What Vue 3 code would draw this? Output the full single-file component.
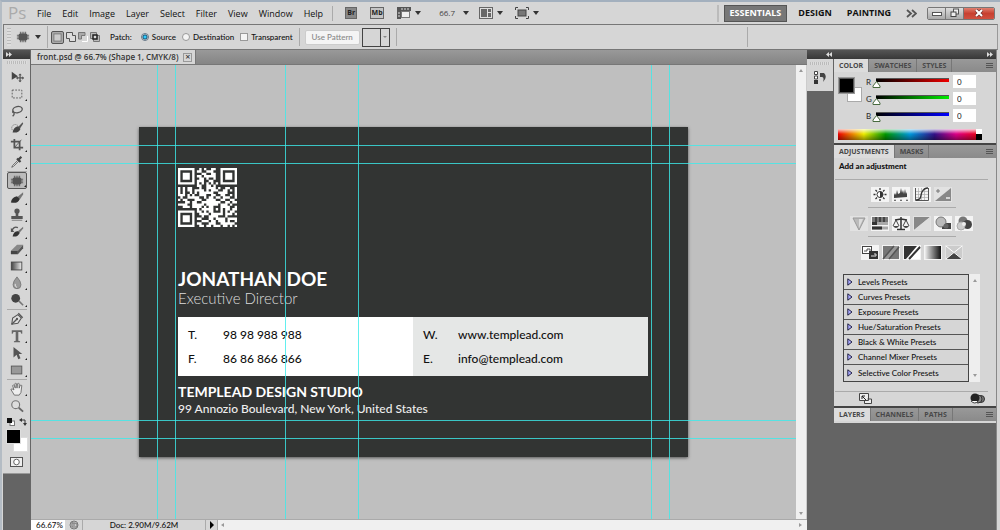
<script setup>
import { ref } from 'vue'

const menus = ['File', 'Edit', 'Image', 'Layer', 'Select', 'Filter', 'View', 'Window', 'Help']
const patch = ref('source')
const transparent = ref(false)

const chip = '<path d="M5 2v12M7 2v12M9 2v12M11 2v12M1 6h14M1 8h14M1 10h14" stroke="#555" fill="none"/><rect x="3" y="4" width="10" height="8" rx="2" fill="#555"/>'

const toolGroups = [
  [
    { name: 'Move', art: '<path d="M2 2v9l7-4z" fill="#444"/><path d="M11.500 5v8M7.500 9h8" stroke="#555" stroke-width="1.400"/><path d="M11.500 4l2 2h-4zM11.500 14l2-2h-4zM7 9l2-2v4zM16 9l-2-2v4z" fill="#555"/>', plain: true },
    { name: 'Marquee', art: '<rect x="2.500" y="3.500" width="11" height="9" fill="none" stroke="#555" stroke-dasharray="2 1.500"/>' },
    { name: 'Lasso', art: '<ellipse cx="8.500" cy="6.500" rx="5.500" ry="3.500" transform="rotate(-12 8 6)" fill="none" stroke="#555" stroke-width="1.500"/><path d="M4 8q-2 1 0 2t-1 4" fill="none" stroke="#555" stroke-width="1.500"/>' },
    { name: 'Quick selection', art: '<circle cx="6" cy="8" r="4" fill="none" stroke="#777" stroke-dasharray="1.500 1"/><path d="M14.500 1.500L9 7l2 2 4-6z" fill="#555"/><path d="M9 6q-5 1-6 7 7 1 9-4z" fill="#444"/>' },
    { name: 'Crop', art: '<path d="M5 1v10h10M1 4h10v10" fill="none" stroke="#555" stroke-width="2"/><path d="M5 11l8-9" stroke="#555"/>' },
    { name: 'Eyedropper', art: '<path d="M9 6l-6 6-1 2 2-1 6-6" fill="#eee" stroke="#555"/><path d="M8 4l4 4M10 5l3-3" stroke="#444" stroke-width="2.500"/>' }
  ],
  [
    { name: 'Patch', art: chip, active: true },
    { name: 'Brush', art: '<path d="M15 1.500L8 7l3 3 4-6z" fill="#777"/><path d="M8 6q-6 1-7 7 8 2 10-4z" fill="#333"/>' },
    { name: 'Clone stamp', art: '<circle cx="8" cy="3.500" r="3" fill="#555"/><path d="M6.500 5h3v4h5v3.500h-13V9h5z" fill="#555"/><path d="M2 14h12" stroke="#777"/>' },
    { name: 'History brush', art: '<path d="M15 2L8 8l2 2 5-6z" fill="#777"/><path d="M9 7q-5 0-6 6 6 1 8-4z" fill="#333"/><path d="M9 3q-5-2-7 4" fill="none" stroke="#555" stroke-width="1.500"/><path d="M1 3v5h4z" fill="#555"/>' },
    { name: 'Eraser', art: '<path d="M1 10l7-7h7l-6 7z" fill="#888"/><path d="M1 10h8v4H1z" fill="#444"/><path d="M9 10l6-7v4l-6 7z" fill="#555"/>' },
    { name: 'Gradient', art: '<defs><linearGradient id="toolgrad"><stop stop-color="#444"/><stop offset="1" stop-color="#eee"/></linearGradient></defs><rect x="1.500" y="3.500" width="12" height="9" fill="url(#toolgrad)" stroke="#444"/>' },
    { name: 'Blur', art: '<path d="M8 1q-4.500 5-4.500 9a4.500 4.500 0 0 0 9 0q0-4-4.500-9z" fill="#999" stroke="#777"/><path d="M6 9q-1 3 2 4" stroke="#eee" fill="none"/>' },
    { name: 'Dodge', art: '<circle cx="6.500" cy="6" r="5" fill="#444"/><path d="M10 9l5 5" stroke="#777" stroke-width="1.800"/>' }
  ],
  [
    { name: 'Pen', art: '<path d="M2 14l1-7 6-4 4 4-4 6z" fill="#ddd" stroke="#555" stroke-width="1.200"/><path d="M2 14l6-6M9.500 1.500l5 5" stroke="#555" stroke-width="1.600"/><circle cx="8" cy="8" r="1.300" fill="#555"/>' },
    { name: 'Type', art: '<path d="M2 1.500h12v4h-1l-1-2H9.500v10l2 .5v1h-7v-1l2-.5v-10H4l-1 2H2z" fill="#666"/>' },
    { name: 'Path selection', art: '<path d="M4 1v12l3.500-3 2 5 2.500-1-2-5h4z" fill="#555"/>' },
    { name: 'Rectangle', art: '<rect x="1.500" y="3.500" width="12" height="9" fill="#999" stroke="#555"/>' }
  ],
  [
    { name: 'Hand', art: '<path d="M5 15L1 8.500q1-1.500 3.500.5L3 4q1-1 2 0l1 3-.5-5q1-1 2 0l.5 5 .5-5q1-1 2 0v5l1-3q1-1 2 0l-1 8-2 3z" fill="#eee" stroke="#666"/>' },
    { name: 'Zoom', art: '<circle cx="6.500" cy="6.500" r="4.500" fill="#ddd" stroke="#777" stroke-width="1.300"/><path d="M10 10l5 4.500" stroke="#666" stroke-width="2"/>', plain: true }
  ]
]

const adjustmentRows = [
  [
    { name: 'Brightness', art: '<circle cx="9" cy="7.500" r="3" fill="#fff" stroke="#333"/><path d="M9 4.500a3 3 0 0 1 0 6z" fill="#333"/><path d="M9 1v2M9 12v2M2.500 7.500h2M13.500 7.500h2M4.500 3l1.500 1.500M12 10.500l1.500 1.500M13.500 3L12 4.500M6 10.500L4.500 12" stroke="#333" stroke-width="1.300"/>' },
    { name: 'Levels', art: '<path d="M2 11V8l1-2 1 2 1-5 1 4 2-1 1-5 1 5 1-3 1 4 1-5 1 5 1-2v5z" fill="#444"/><path d="M2 14l1-2 1 2zM8 14l1-2 1 2zM14 14l1-2 1 2z" fill="#444"/>' },
    { name: 'Curves', art: '<path d="M5.500 1v12M8.500 1v12M11.500 1v12M3 4.500h12M3 7.500h12M3 10.500h12" stroke="#aaa" stroke-width=".7"/><path d="M2.500 1v12.500h13V1" stroke="#555" fill="none"/><path d="M3 13c6 0 4-4 6-8 1-2 3-4 6-4" fill="none" stroke="#333" stroke-width="1.300"/>' },
    { name: 'Exposure', soft: true, art: '<path d="M1 14L17 1v13z" fill="#888"/><path d="M2 4h4M4 2v4" stroke="#777"/><path d="M12 11h4" stroke="#eee" stroke-width="1.500"/>' }
  ],
  [
    { name: 'Vibrance', soft: true, art: '<path d="M3 2h12L9 14z" fill="#bbb" stroke="#999"/><path d="M9 3h4L9 12z" fill="#ddd"/>' },
    { name: 'Hue and saturation', art: '<path d="M1 1h16v5H1z" fill="#777"/><path d="M5 1v5M9 1v5M13 1v5" stroke="#333" stroke-width="1.500"/><path d="M1 7.500h16M1 12h16" stroke="#aaa" stroke-width="3"/><path d="M1 12h10M1 7.500h5" stroke="#333" stroke-width="3"/>' },
    { name: 'Color balance', art: '<path d="M9 1v12M3 4l6-1 6 1M5 13.500h8" fill="none" stroke="#333" stroke-width="1.500"/><path d="M1 10l3-6 3 6M11 10l3-6 3 6" fill="none" stroke="#444"/><path d="M1 10h6q-3 4-6 0zM11 10h6q-3 4-6 0z" fill="#444"/>' },
    { name: 'Black and white', soft: true, art: '<path d="M1 1h16L1 14z" fill="#888"/><path d="M17 1v13H1z" fill="#ddd"/>' },
    { name: 'Photo filter', art: '<path d="M8 7h9v6H8z" fill="#444"/><circle cx="7" cy="6" r="5" fill="#bbb" stroke="#777"/><circle cx="12" cy="10" r="2.500" fill="#666"/>' },
    { name: 'Channel mixer', art: '<circle cx="8" cy="5" r="4.500" fill="#777"/><circle cx="12.500" cy="8.500" r="4.500" fill="#444"/><circle cx="6" cy="10" r="4" fill="#ccc" stroke="#aaa"/><circle cx="9" cy="8" r="2" fill="#eee"/>' }
  ],
  [
    { name: 'Invert', art: '<rect x="1.500" y="1.500" width="9" height="7" fill="#fff" stroke="#444"/><path d="M3 6h3V4h3v2" stroke="#555" fill="none"/><rect x="8" y="6" width="9" height="8" fill="#333"/><path d="M10 11h5V9h-2" stroke="#ddd" fill="none"/>' },
    { name: 'Posterize', art: '<path d="M1 1h16v13H1z" fill="#777"/><path d="M1 14L12 1h5L7 14z" fill="#999"/><path d="M1 14L12 1M7 14L17 2" stroke="#555" stroke-width="1.500"/>' },
    { name: 'Threshold', art: '<path d="M1 1h16v13H1z" fill="#333"/><path d="M3 14L14 1h3L7 14z" fill="#fff"/><path d="M7 14L17 3v11z" fill="#fff"/><path d="M6 14L17 2" stroke="#333" stroke-width="2"/>' },
    { name: 'Gradient map', art: '<defs><linearGradient id="mapgrad"><stop stop-color="#eee"/><stop offset="1" stop-color="#111"/></linearGradient></defs><path d="M1 1h16v13H1z" fill="url(#mapgrad)"/>' },
    { name: 'Selective color', soft: true, art: '<path d="M1 1h16v13H1z" fill="#ccc"/><path d="M1 14l8-7 8 7z" fill="#444"/><path d="M1 1l16 13M17 1L1 14" stroke="#fff"/>' }
  ]
]

const presets = ['Levels', 'Curves', 'Exposure', 'Hue/Saturation', 'Black & White', 'Channel Mixer', 'Selective Color']
const channels = ref([
  { name: 'R', value: '0', tone: 'red' },
  { name: 'G', value: '0', tone: 'green' },
  { name: 'B', value: '0', tone: 'blue' }
])

const qr = [
  '1111111001010011001111111',
  '1000001011001110001000001',
  '1011101000110011001011101',
  '1011101011011111001011101',
  '1011101001101001001011101',
  '1000001011100110001000001',
  '1111111010101010101111111',
  '0000000011001101000000000',
  '1010110001001111010011001',
  '1010110111101011100110101',
  '1010010101111110011110001',
  '1110101001110011001100101',
  '0100111110010110110111001',
  '1011000111001111001100110',
  '0001101100111111110011011',
  '1111001111101111101110100',
  '0011101111010110001111001',
  '0000000010111110101011011',
  '1111111011010110001010110',
  '1000001001111011111011101',
  '1011101000100111100010000',
  '1011101011000110111101111',
  '1011101000111011011101001',
  '1000001011000111001111110',
  '1111111001101101110110101'
]
const qrPath = qr.map((row, y) => [...row].map((c, x) => (c === '1' ? `M${x} ${y}h1v1h-1z` : '')).join('')).join('')

const verticalGuides = [126, 144, 254, 327, 620, 638]
const horizontalGuides = [80, 98, 355, 373]
</script>

<template>
  <div class="app">
    <header class="menubar">
      <span class="logo">Ps</span>
      <nav class="menus">
        <button v-for="m in menus" :key="m">{{ m }}</button>
      </nav>
      <div class="launch">
        <button class="square" aria-label="Bridge"><b>Br</b></button>
        <button class="square folder" aria-label="Mini Bridge"><b>Mb</b></button>
        <button class="drop" aria-label="View extras">
          <svg width="14" height="12" viewBox="0 0 14 12"><path d="M0 0h14v4H4v8H0z" fill="#555" /><path d="M5 1v2M8 1v2M11 1v2M1 6h2M1 9h2" stroke="#ddd" /><rect x="4.500" y="4.500" width="8" height="6" fill="#eee" stroke="#777" /></svg>
          <i class="caret"></i>
        </button>
        <button class="drop level">66.7<i class="caret"></i></button>
        <button class="drop" aria-label="Arrange documents">
          <svg width="14" height="12" viewBox="0 0 14 12"><rect x=".5" y=".5" width="13" height="11" fill="#ddd" stroke="#666" /><path d="M2 2h6v8H2zM9 2h3v3H9zM9 6h3v4H9z" fill="#666" /></svg>
          <i class="caret"></i>
        </button>
        <button class="drop" aria-label="Screen mode">
          <svg width="14" height="12" viewBox="0 0 14 12"><rect x="3" y="3" width="8" height="6" fill="#777" stroke="#444" /><path d="M.5 3V.5H3M11 .5h2.500V3M13.500 9v2.500H11M3 11.500H.5V9" fill="none" stroke="#444" /></svg>
          <i class="caret"></i>
        </button>
      </div>
      <div class="workspaces">
        <button class="chosen">ESSENTIALS</button>
        <button>DESIGN</button>
        <button>PAINTING</button>
        <button class="more" aria-label="More workspaces">
          <svg width="11" height="9" viewBox="0 0 11 9"><path d="M1 1l4 3.500L1 8M6 1l4 3.500L6 8" fill="none" stroke="#555" stroke-width="1.800" /></svg>
        </button>
      </div>
      <div class="window">
        <button aria-label="Minimize"><svg width="10" height="8" viewBox="0 0 10 8"><rect x=".5" y="3.500" width="9" height="3" fill="#fff" stroke="#555" /></svg></button>
        <button aria-label="Restore"><svg width="10" height="10" viewBox="0 0 10 10"><rect x="3.500" y="1" width="5" height="5" fill="#eee" stroke="#555" /><rect x="1" y="4" width="5" height="4.500" fill="#eee" stroke="#444" /></svg></button>
        <button class="close" aria-label="Close"><svg width="10" height="8" viewBox="0 0 10 8"><path d="M2 1l6 6M8 1L2 7" stroke="#733" stroke-width="3.500" /><path d="M2 1l6 6M8 1L2 7" stroke="#fff" stroke-width="2" /></svg></button>
      </div>
    </header>

    <section class="options">
      <i class="grip-v"></i>
      <button class="toolpick" aria-label="Patch tool presets"><svg width="14" height="14" viewBox="0 0 16 16" v-html="chip"></svg><i class="caret"></i></button>
      <div class="modes">
        <button class="on" aria-label="New selection"><svg width="9" height="9" viewBox="0 0 10 10"><rect x="1" y="1" width="8" height="8" fill="#ccc" stroke="#777" /></svg></button>
        <button aria-label="Add to selection"><svg width="10" height="10" viewBox="0 0 10 10"><path d="M.5.5h6v3h3v6h-6v-3h-3z" fill="#ddd" stroke="#555" /></svg></button>
        <button aria-label="Subtract from selection"><svg width="10" height="10" viewBox="0 0 10 10"><path d="M.5 7V.5H7v3H3.500V7z" fill="#aaa" stroke="#777" /><path d="M4 9.500h5.500V4" fill="none" stroke="#fff" /></svg></button>
        <button aria-label="Intersect with selection"><svg width="10" height="10" viewBox="0 0 10 10"><path d="M.5.5h6v3h3v6h-6v-3h-3z" fill="#bbb" stroke="#777" /><rect x="3" y="3" width="4" height="4" fill="#ddd" stroke="#222" stroke-width="1.500" /></svg></button>
      </div>
      <span class="caption">Patch:</span>
      <label><input v-model="patch" type="radio" name="patch" value="source">Source</label>
      <label><input v-model="patch" type="radio" name="patch" value="destination">Destination</label>
      <label><input v-model="transparent" type="checkbox">Transparent</label>
      <div class="pattern">
        <button class="use" disabled>Use Pattern</button>
        <button class="swatch" aria-label="Pattern picker"><span></span><i class="caret"></i></button>
      </div>
      <i class="options-end"></i>
    </section>

    <main>
      <aside class="toolbox">
        <div class="strip"><svg width="6" height="5" viewBox="0 0 6 5"><path d="M0 0l3 2.500L0 5zM3 0l3 2.500L3 5z" fill="#ddd" /></svg></div>
        <div class="tools">
          <i class="grip-h"></i>
          <div v-for="(group, g) in toolGroups" :key="g" class="group">
            <button v-for="t in group" :key="t.name" :aria-label="t.name" :class="{ active: t.active, flyout: !t.plain }">
              <svg width="14" height="14" viewBox="0 0 16 16" v-html="t.art"></svg>
            </button>
          </div>
          <div class="mini">
            <svg width="8" height="8" viewBox="0 0 8 8"><rect x="3" y="3" width="4.500" height="4.500" fill="#fff" stroke="#777" /><path d="M0 0h5v5H0z" fill="#111" /></svg>
            <svg width="8" height="8" viewBox="0 0 8 8"><path d="M2 2h4v4" fill="none" stroke="#333" /><path d="M0 2l3-2v4zM6 8L4 5h4z" fill="#333" /></svg>
          </div>
          <div class="inks"><i class="back"></i><i class="front"></i></div>
          <button class="mask" aria-label="Quick mask"><svg width="13" height="10" viewBox="0 0 13 10"><rect x=".5" y=".5" width="12" height="9" fill="#eee" stroke="#555" /><circle cx="6.500" cy="5" r="2.800" fill="#fff" stroke="#666" /></svg></button>
        </div>
      </aside>

      <section class="document">
        <div class="tabs">
          <div class="tab">front.psd @ 66.7% (Shape 1, CMYK/8)<button aria-label="Close document">×</button></div>
        </div>
        <div class="view">
          <div class="canvas">
            <article class="card">
              <svg class="qr" viewBox="0 0 25 25" role="img" aria-label="QR code"><path :d="qrPath" fill="#fff" /></svg>
              <h1>JONATHAN DOE</h1>
              <p class="role">Executive Director</p>
              <div class="contacts">
                <dl>
                  <dt>T.</dt><dd>98 98 988 988</dd>
                  <dt>F.</dt><dd>86 86 866 866</dd>
                </dl>
                <dl>
                  <dt>W.</dt><dd>www.templead.com</dd>
                  <dt>E.</dt><dd>info@templead.com</dd>
                </dl>
              </div>
              <h2>TEMPLEAD DESIGN STUDIO</h2>
              <p class="address">99 Annozio Boulevard, New York, United States</p>
            </article>
            <i v-for="x in verticalGuides" :key="'v' + x" class="guide-v" :style="{ left: x + 'px' }"></i>
            <i v-for="y in horizontalGuides" :key="'h' + y" class="guide-h" :style="{ top: y + 'px' }"></i>
          </div>
          <div class="scroll-v"><i class="up"></i><i class="down"></i></div>
        </div>
        <footer>
          <input value="66.67%" aria-label="Zoom level">
          <button class="info" aria-label="Document information"><svg width="10" height="10" viewBox="0 0 10 10"><circle cx="5" cy="5" r="4" fill="#ccc" stroke="#777" /><path d="M3 2v5h5V4L6 3H3M5 3v3" fill="none" stroke="#777" /></svg></button>
          <span class="size">Doc: 2.90M/9.62M</span>
          <button class="next" aria-label="Status options"><i></i></button>
          <div class="scroll-h"><i class="left"></i><i class="right"></i></div>
        </footer>
      </section>

      <aside class="dock">
        <div class="strip">
          <svg width="6" height="5" viewBox="0 0 6 5"><path d="M3 0L0 2.500 3 5zM6 0L3 2.500 6 5z" fill="#ddd" /></svg>
          <svg width="6" height="5" viewBox="0 0 6 5"><path d="M0 0l3 2.500L0 5zM3 0l3 2.500L3 5z" fill="#ddd" /></svg>
        </div>
        <div class="columns">
          <div class="rail">
            <div class="history">
              <i class="grip-h"></i>
              <button aria-label="History"><svg width="12" height="14" viewBox="0 0 12 14"><path d="M.5.5h3v3h-3zM.5 5h3v3h-3z" fill="#fff" stroke="#444" /><path d="M0 9h4v4H0z" fill="#333" /><path d="M6 2h4q4 4-1 9 1.500-5-1-5H6z" fill="#444" /></svg></button>
            </div>
          </div>
          <div class="panels">
            <section class="panel">
              <div class="panel-tabs"><button class="current">COLOR</button><button>SWATCHES</button><button>STYLES</button><i class="panel-menu"></i></div>
              <div class="color-body">
                <div class="mixer">
                  <div class="pair"><i class="back"></i><i class="front"></i></div>
                  <div class="sliders">
                    <div v-for="c in channels" :key="c.name" class="channel">
                      <label :for="'ch' + c.name">{{ c.name }}</label>
                      <div class="track" :class="c.tone">
                        <svg width="9" height="7" viewBox="0 0 9 7"><path d="M4.500 .5L8 5v1.500H1V5z" fill="#fff" stroke="#486b40" /></svg>
                      </div>
                      <input :id="'ch' + c.name" v-model="c.value">
                    </div>
                  </div>
                </div>
                <div class="spectrum"><i></i></div>
              </div>
            </section>

            <section class="panel">
              <div class="panel-tabs"><button class="current">ADJUSTMENTS</button><button>MASKS</button><i class="panel-menu"></i></div>
              <div class="adjust-body">
                <h3>Add an adjustment</h3>
                <div class="icon-rows">
                  <div v-for="(row, r) in adjustmentRows" :key="r" class="icon-row">
                    <button v-for="a in row" :key="a.name" :aria-label="a.name" :class="{ soft: a.soft }"><svg width="18" height="15" viewBox="0 0 18 15" v-html="a.art"></svg></button>
                  </div>
                </div>
                <div class="presets">
                  <ul>
                    <li v-for="p in presets" :key="p"><svg width="6" height="8" viewBox="0 0 6 8"><path d="M.8.8L5 4 .8 7.200z" fill="#aaf" stroke="#224" /></svg>{{ p }} Presets</li>
                  </ul>
                  <div class="list-scroll"><i class="up"></i><i class="down"></i></div>
                </div>
                <div class="adjust-foot">
                  <svg width="13" height="11" viewBox="0 0 13 11"><path d="M.5.5h9v7h-9zM8.500 6h4v4.500h-7V8" fill="#eee" stroke="#444" /><path d="M3 3l4 4M3 6V3h3" stroke="#222" fill="none" /></svg>
                  <svg width="15" height="11" viewBox="0 0 15 11"><circle cx="11" cy="6" r="3.500" fill="#777" stroke="#333" /><circle cx="8" cy="6" r="4" fill="#888" stroke="#333" /><circle cx="5" cy="5" r="4.500" fill="#222" /><path d="M1 8q4 4 7 0" fill="#fff" stroke="#444" /></svg>
                </div>
              </div>
            </section>

            <section class="panel last">
              <div class="panel-tabs"><button class="current">LAYERS</button><button>CHANNELS</button><button>PATHS</button><i class="panel-menu"></i></div>
            </section>
          </div>
        </div>
      </aside>
    </main>
  </div>
</template>

<style>
html, body { background: #d6d6d6; overflow: hidden; }
</style>

<style scoped>
* { box-sizing: border-box; margin: 0; padding: 0; }
button { border: 0; background: none; font: inherit; color: inherit; display: flex; align-items: center; justify-content: center; }
input { font: inherit; color: inherit; border: 0; }
svg { display: block; flex: none; }
.app { height: 100vh; display: flex; flex-direction: column; background: #d6d6d6; border-top: 2px solid #a3b0be; border-left: 2px solid #b4bcc4; font: 500 8px/12px Lato, "Open Sans", sans-serif; color: #111; overflow: hidden; }
.caret { border: 3px solid transparent; border-top: 4px solid #333; border-bottom: 0; }

.menubar { display: flex; align-items: center; height: 22px; flex: none; padding-right: 5px; font: 9px/12px "Open Sans", sans-serif; }
.logo { width: 26px; margin-left: 6px; font: 17px/20px "Open Sans", sans-serif; color: #aaa; }
.menus { display: flex; gap: 11px; padding: 0 9px 0 3px; border-right: 1px solid #aaa; line-height: 15px; }
.launch { display: flex; align-items: center; margin-left: 12px; flex: 1; }
.square { width: 12px; height: 12px; border: 1px solid #666; background: #888; color: #222; font-size: 7px; line-height: 10px; margin-right: 13px; }
.square.folder { width: 14px; background: #c4c4c4; }
.drop { gap: 4px; margin-right: 18px; }
.level { gap: 8px; color: #444; margin-right: 10px; font-size: 8px; }
.level ~ .drop:not(.level) { margin-right: 12px; }
.workspaces { display: flex; align-items: center; font-weight: 700; font-size: 9px; border-left: 2px solid #bbb; padding-left: 5px; margin-right: 10px; }
.workspaces button { height: 17px; margin-right: 15px; }
.workspaces .chosen { background: #777; border: 1px solid #555; color: #fff; padding: 0 5px; margin-right: 11px; }
.workspaces .more { margin: 0; }
.window { display: flex; border: 1px solid #777; border-radius: 2px; height: 13px; overflow: hidden; }
.window button { width: 18px; background: linear-gradient(#ddd, #aaa); border-right: 1px solid #777; }
.window .close { width: 30px; background: linear-gradient(#e08070, #c84030 50%, #d05040); border: 0; }

.options { display: flex; align-items: center; height: 26px; flex: none; border: 1px solid #777; border-right-color: #999; margin: 0 2px 0 1px; }
.grip-v { width: 4px; height: 18px; margin-left: 3px; background: repeating-linear-gradient(#bbb 0 1px, #ddd 1px 3px); }
.toolpick { gap: 5px; padding: 0 6px 0 5px; height: 22px; border-right: 1px solid #aaa; }
.modes { display: flex; align-items: center; gap: 2px; margin-left: 3px; }
.modes .on { width: 13px; height: 13px; border: 1px solid #555; border-radius: 2px; background: #aaa; }
.caption { margin: 0 9px 0 10px; }
label { display: flex; align-items: center; }
.options label { gap: 3px; margin-right: 6px; }
.options input { appearance: none; width: 8px; height: 8px; border: 1px solid #999; background: #f4f4f4; }
.options input[type=radio] { border-radius: 50%; }
.options input[type=radio]:checked { background: radial-gradient(circle, #3cf 0 1px, #157 2px 2px, #ddd 3px); border-color: #678; }
.pattern { display: flex; align-items: center; gap: 2px; border-left: 1px solid #aaa; border-right: 1px solid #aaa; height: 18px; padding: 0 6px 0 5px; }
.use { width: 55px; height: 15px; background: #f4f4f4; border: 1px solid #ccc; color: #888; border-radius: 2px; }
.swatch { width: 28px; height: 19px; border: 1px solid #444; align-items: stretch; }
.swatch span { flex: 1; border-right: 1px solid #444; }
.swatch .caret { align-self: center; margin: 0 2px; border-width: 2px; border-top: 2px solid #888; border-bottom: 0; }
.options-end { height: 20px; border-left: 1px solid #aaa; margin-left: auto; margin-right: 249px; }

main { flex: 1; display: flex; min-height: 0; margin: 0 3px 0 1px; }
.strip { height: 9px; flex: none; background: linear-gradient(#555, #383838); display: flex; align-items: center; justify-content: space-between; padding: 0 3px; }
.grip-h { display: block; width: 20px; height: 3px; background: repeating-linear-gradient(90deg, #bbb 0 1px, #ddd 1px 2px); }
.toolbox { width: 28px; flex: none; background: #646464; border-right: 1px solid #666; }
.tools { background: #d6d6d6; display: flex; flex-direction: column; align-items: center; padding: 2px 0 6px; border-bottom: 1px solid #999; }
.tools > .grip-h { margin-bottom: 4px; }
.group + .group { border-top: 1px solid #aaa; margin-top: 1px; }
.group button { width: 20px; height: 17px; position: relative; }
.group .active { border: 1px solid #555; border-radius: 2px; background: #bbb; }
.flyout::after { content: ""; position: absolute; right: 0; bottom: 1px; border: 1px solid #222; border-top-color: transparent; border-left-color: transparent; }
.mini { display: flex; justify-content: space-between; width: 20px; margin-top: 4px; }
.inks { position: relative; width: 22px; height: 23px; margin-top: 3px; }
.inks i, .pair i { position: absolute; width: 15px; height: 15px; border: 1px solid #ddd; }
.inks .front { left: 0; top: 0; background: #000; }
.inks .back { right: 0; bottom: 0; background: #fff; }
.mask { margin-top: 5px; }

.document { flex: 1; min-width: 0; display: flex; flex-direction: column; }
.tabs { height: 15px; flex: none; background: linear-gradient(#999, #858585); border-bottom: 1px solid #777; display: flex; }
.tab { display: flex; align-items: center; gap: 5px; padding: 0 3px 0 6px; background: #d6d6d6; font: 600 8px/12px "Open Sans", sans-serif; color: #333; border-right: 1px solid #777; }
.tab button { width: 9px; height: 9px; border: 1px solid #999; font-size: 9px; }
.view { flex: 1; display: flex; min-height: 0; }
.canvas { flex: 1; position: relative; background: #bfbfbf; overflow: hidden; }
.scroll-v { width: 11px; background: #f0f0f0; border-right: 1px solid #ccc; display: flex; flex-direction: column; align-items: center; justify-content: space-between; padding: 4px 0; }
.up, .down { border: 2px solid transparent; }
.up { border-bottom: 3px solid #999; border-top: 0; }
.down { border-top: 3px solid #999; border-bottom: 0; }
.guide-v { position: absolute; top: 0; bottom: 0; width: 1px; background: rgba(60, 235, 235, .8); }
.guide-h { position: absolute; left: 0; right: 0; height: 1px; background: rgba(60, 235, 235, .8); }

.card { position: absolute; left: 108px; top: 62px; width: 549px; height: 330px; padding: 41px 40px 0 39px; background: #323433; color: #fff; box-shadow: 0 1px 3px #555; font-family: Lato, sans-serif; }
.qr { width: 59px; height: 59px; }
.card h1 { font: 700 19px/24px Lato, sans-serif; margin-top: 40px; }
.role { font: 300 15px/14px Lato, sans-serif; color: #ddd; }
.contacts { display: flex; margin-top: 12px; color: #111; }
dl { flex: 1; display: grid; grid-template-columns: 35px 1fr; align-content: start; padding: 6px 10px 5px; background: #fff; font-size: 12px; line-height: 24px; }
dl + dl { background: #e5e7e6; }
.card h2 { font: 700 14px/18px Lato, sans-serif; margin-top: 7px; }
.address { font-size: 12px; line-height: 16px; color: #eee; }

footer { display: flex; height: 11px; flex: none; border-top: 1px solid #aaa; line-height: 10px; }
footer input { width: 34px; padding-left: 5px; background: #fff; }
.info { width: 17px; }
.size { width: 124px; border: 1px solid #aaa; border-width: 0 1px; text-align: center; }
.next { width: 12px; border-right: 1px solid #aaa; }
.next i { border: 4px solid transparent; border-left: 4px solid #000; border-right: 0; }
.scroll-h { flex: 1; display: flex; align-items: center; justify-content: space-between; background: #f0f0f0; padding: 0 5px 0 3px; }
.left, .right { border: 2px solid transparent; }
.left { border-right: 3px solid #999; border-left: 0; }
.right { border-left: 3px solid #999; border-right: 0; }

.dock { width: 190px; flex: none; display: flex; flex-direction: column; border-right: 1px solid #888; }
.dock .strip { padding-left: 19px; }
.columns { flex: 1; display: flex; background: #646464; }
.rail { width: 27px; }
.history { width: 26px; height: 32px; background: #d6d6d6; display: flex; flex-direction: column; align-items: center; gap: 6px; padding-top: 3px; }
.panels { flex: 1; }
.panel { background: #d6d6d6; border-bottom: 2px solid #444; }
.panel.last { padding-bottom: 2px; border: 0; }
.panel-tabs { display: flex; height: 13px; background: linear-gradient(#999, #8a8a8a); font: 700 7px/12px "Open Sans", sans-serif; color: #484848; }
.panel-tabs button { padding: 0 5px; border-right: 1px solid #777; }
.panel-tabs .current { background: #dcdcdc; }
.panel-menu { margin: 4px 3px 0 auto; width: 7px; height: 6px; background: repeating-linear-gradient(#555 0 1px, transparent 1px 2px); }
.color-body { padding: 1px 14px 3px 4px; }
.mixer { display: flex; padding-right: 6px; }
.pair { position: relative; width: 24px; height: 24px; margin-top: 5px; }
.pair .back { right: 0; bottom: 0; background: #fff; border-color: #aaa; }
.pair .front { left: 1px; top: 0; background: #000; border: 1px solid #555; outline: 1px solid #999; }
.sliders { flex: 1; }
.channel { display: flex; align-items: center; height: 17px; color: #333; }
.channel label { width: 14px; padding-left: 4px; height: 15px; }
.channel input { width: 23px; height: 13px; margin-left: 4px; padding-left: 4px; }
.track { flex: 1; height: 4px; border-top: 1px solid #555; margin-bottom: 4px; }
.track svg { margin: 2px 0 0 -4px; }
.red { background: linear-gradient(90deg, #000, #e00); }
.green { background: linear-gradient(90deg, #000, #0e0); }
.blue { background: linear-gradient(90deg, #000, #00f); }
.spectrum { height: 11px; margin-top: 5px; display: flex; background: linear-gradient(rgba(255,255,255,.8), transparent 45%, rgba(0,0,0,.4)), linear-gradient(90deg, #e00, #ee0 18%, #090 33%, #09d 50%, #318 67%, #d08 82%, #e00); }
.spectrum i { margin-left: auto; width: 6px; background: linear-gradient(#fff 50%, #000 50%); }
.adjust-body { padding: 2px 8px 2px 1px; }
h3 { font: 900 8px/12px Lato, sans-serif; padding: 0 0 7px 4px; border-bottom: 1px solid #aaa; }
.icon-rows { display: flex; flex-direction: column; align-items: center; padding-top: 7px; }
.icon-row { display: flex; gap: 3px; justify-content: center; min-width: 88px; }
.icon-row:not(:last-child) { padding-bottom: 6px; margin-bottom: 8px; background: linear-gradient(#aaa, #aaa) center bottom / 88px 1px no-repeat; }
.icon-row button { background: #f4f4f4; }
.icon-row .soft { background: #e2e2e2; }
.presets { display: flex; margin: 14px 8px 0; }
ul { flex: 1; list-style: none; border: 1px solid #444; }
li { display: flex; align-items: center; gap: 5px; height: 15px; padding-left: 3px; border-bottom: 1px solid #555; }
li:last-child { height: 16px; border: 0; }
.list-scroll { width: 11px; background: #eee; display: flex; flex-direction: column; align-items: center; justify-content: space-between; padding: 5px 0; }
.adjust-foot { display: flex; justify-content: space-between; border-top: 1px solid #aaa; margin-top: 9px; padding: 1px 3px 0 24px; }
</style>
